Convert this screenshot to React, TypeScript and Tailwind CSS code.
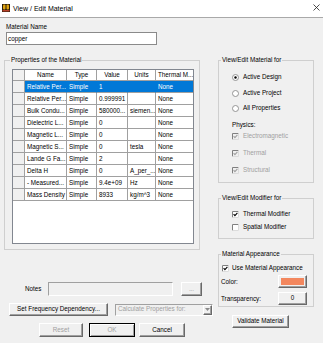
import React from 'react';

const rows = [
  ['Relative Per...', 'Simple', '1', '', 'None'],
  ['Relative Per...', 'Simple', '0.999991', '', 'None'],
  ['Bulk Condu...', 'Simple', '580000...', 'siemen...', 'None'],
  ['Dielectric L...', 'Simple', '0', '', 'None'],
  ['Magnetic L...', 'Simple', '0', '', 'None'],
  ['Magnetic S...', 'Simple', '0', 'tesla', 'None'],
  ['Lande G Fa...', 'Simple', '2', '', 'None'],
  ['Delta H', 'Simple', '0', 'A_per_...', 'None'],
  ['- Measured...', 'Simple', '9.4e+09', 'Hz', 'None'],
  ['Mass Density', 'Simple', '8933', 'kg/m^3', 'None'],
];

const headers = ['Name', 'Type', 'Value', 'Units', 'Thermal M...'];

function Btn({
  children,
  className = '',
  disabled = false,
  def = false,
}: {
  children?: React.ReactNode;
  className?: string;
  disabled?: boolean;
  def?: boolean;
}) {
  const frame = def
    ? 'border border-black shadow-[inset_1px_1px_0_#fff,inset_-1px_-1px_0_#a0a0a0]'
    : 'border border-t-white border-l-white border-r-[#696969] border-b-[#696969] shadow-[inset_-1px_-1px_0_#a0a0a0]';
  return (
    <div
      className={`flex items-center justify-center bg-[#f0f0f0] leading-none whitespace-nowrap ${frame} ${
        disabled ? 'text-[#a0a0a0]' : ''
      } ${className}`}
    >
      {children}
    </div>
  );
}

function Radio({ on = false }: { on?: boolean }) {
  return (
    <svg width="7" height="7" viewBox="0 0 7 7" className="shrink-0">
      <circle cx="3.5" cy="3.5" r="3" fill="#fff" stroke="#8a8a8a" strokeWidth="0.9" />
      {on && <circle cx="3.5" cy="3.5" r="1.2" fill="#000" />}
    </svg>
  );
}

function Check({ on = false, disabled = false }: { on?: boolean; disabled?: boolean }) {
  return (
    <svg width="7" height="7" viewBox="0 0 7 7" className="shrink-0">
      <rect x="0" y="0" width="7" height="7" fill={disabled ? '#f0f0f0' : '#fff'} />
      <path d="M0.5 6.5 V0.5 H6.5" fill="none" stroke="#808080" strokeWidth="1" />
      <path d="M6.5 0.5 V6.5 H0.5" fill="none" stroke="#dcdcdc" strokeWidth="1" />
      {on && (
        <path
          d="M1.6 3.2 L2.9 4.6 L5.4 1.9"
          fill="none"
          stroke={disabled ? '#a0a0a0' : '#000'}
          strokeWidth="1.1"
        />
      )}
    </svg>
  );
}

function Group({
  title,
  className = '',
  children,
}: {
  title: string;
  className?: string;
  children: React.ReactNode;
}) {
  return (
    <fieldset className={`border border-[#cfcfcf] ${className}`}>
      <legend className="px-[1px] h-[8px] leading-[8px]">{title}</legend>
      {children}
    </fieldset>
  );
}

function PropsTable() {
  return (
    <div className="ml-[2px] mt-[5px] w-[182px] h-[175px] bg-white border border-[#828790] overflow-hidden">
      <div className="grid grid-cols-[12px_42px_30px_31px_28px_37px]">
        <div className="h-[11px] bg-[#f0f0f0] border-r border-b border-[#a0a0a0]" />
        {headers.map((h, i) => (
          <div
            key={h}
            className={`h-[11px] leading-[10px] border-b border-[#a0a0a0] whitespace-nowrap overflow-hidden ${
              i < 4 ? 'border-r text-center' : 'pl-[2px]'
            }`}
          >
            {h}
          </div>
        ))}
        {rows.map((r, ri) => {
          const sel = ri === 0;
          return (
            <React.Fragment key={ri}>
              <div className="h-[12px] bg-[#f0f0f0] border-r border-b border-[#a0a0a0]" />
              {r.map((c, ci) => (
                <div
                  key={ci}
                  className={`h-[12px] leading-[11px] pl-[2px] border-b whitespace-nowrap overflow-hidden ${
                    ci < 4 ? 'border-r' : ''
                  } ${
                    sel
                      ? 'bg-[#0078d7] text-white border-b-[#a0a0a0] border-r-[#0078d7]'
                      : 'border-[#a0a0a0]'
                  }`}
                >
                  {c}
                </div>
              ))}
            </React.Fragment>
          );
        })}
      </div>
    </div>
  );
}

export default function App() {
  return (
    <div className="w-[323px] h-[343px] bg-[#f0f0f0] text-black text-[6.3px] font-['Liberation_Sans',Arial,sans-serif] overflow-hidden">
      {/* title bar */}
      <div className="h-[18px] bg-white border-b border-[#a9a9a9] flex items-center">
        <svg width="8" height="8" viewBox="0 0 8 8" className="ml-[2px] mt-[-1px]">
          <rect width="8" height="8" fill="#2b1e0c" />
          <rect x="1" y="0.5" width="2.5" height="5" rx="1" fill="#e0a512" />
          <rect x="4.5" y="0.5" width="2.5" height="5" rx="1" fill="#e0a512" />
          <rect x="0.5" y="6" width="7" height="1.5" fill="#b8402a" />
        </svg>
        <span className="ml-[3px] text-[7px] leading-none mt-[-1px]">View / Edit Material</span>
        <svg width="7" height="7" viewBox="0 0 7 7" className="ml-auto mr-[3px] mt-[-2px]">
          <path d="M0.5 0.5 L6.5 6.5 M6.5 0.5 L0.5 6.5" stroke="#222" strokeWidth="0.8" />
        </svg>
      </div>

      <div className="flex">
        {/* left column */}
        <div className="ml-[4px] w-[210px] flex flex-col">
          <div className="ml-[2px] mt-[5px] h-[8px] leading-[8px]">Material Name</div>
          <div className="ml-[2px] mt-[1px] w-[151px] h-[13px] bg-white border border-[#8a8a8a] pl-[1px] leading-[11px]">
            copper
          </div>

          <Group title="Properties of the Material" className="mt-[11px] w-[196px] pl-[5px]">
            <PropsTable />
            <div className="h-[5px]" />
          </Group>

          <div className="mt-[32px] h-[14px] flex items-center">
            <span className="ml-[21px] w-[23px]">Notes</span>
            <div className="w-[125px] h-[14px] bg-[#f0f0f0] border border-t-[#a0a0a0] border-l-[#a0a0a0] border-r-white border-b-white" />
            <Btn disabled className="ml-[8px] w-[21px] h-[14px]">
              ...
            </Btn>
          </div>

          <div className="mt-[7px] h-[13px] flex items-center">
            <Btn className="ml-[5px] w-[99px] h-[13px]">Set Frequency Dependency...</Btn>
            <div className="ml-[7px] w-[98px] h-[12px] flex items-center bg-[#f0f0f0] border border-t-[#a0a0a0] border-l-[#a0a0a0] border-r-white border-b-white">
              <span className="pl-[2px] flex-1 text-[#a0a0a0] whitespace-nowrap overflow-hidden leading-none">
                Calculate Properties for:
              </span>
              <Btn className="w-[9px] h-[10px]">
                <svg width="5" height="3" viewBox="0 0 5 3">
                  <path d="M0 0 H5 L2.5 3 Z" fill="#8a8a8a" />
                </svg>
              </Btn>
            </div>
          </div>

          <div className="mt-[7px] h-[14px] flex">
            <Btn disabled className="ml-[35px] w-[44px] h-[14px]">
              Reset
            </Btn>
            <Btn disabled def className="ml-[6px] w-[46px] h-[14px]">
              OK
            </Btn>
            <Btn className="ml-[4px] w-[46px] h-[14px]">Cancel</Btn>
          </div>
        </div>

        {/* right column */}
        <div className="ml-[4px] w-[96px] flex flex-col">
          <Group title="View/Edit Material for" className="mt-[38px] px-[2px] pb-[8px]">
            <div className="pl-[11px] flex flex-col">
              <div className="mt-[9px] h-[8px] flex items-center gap-[4px]">
                <Radio on />
                <span>Active Design</span>
              </div>
              <div className="mt-[8px] h-[8px] flex items-center gap-[4px]">
                <Radio />
                <span>Active Project</span>
              </div>
              <div className="mt-[7px] h-[8px] flex items-center gap-[4px]">
                <Radio />
                <span>All Properties</span>
              </div>
              <div className="mt-[9px] h-[8px] leading-[8px]">Physics:</div>
              <div className="mt-[3px] h-[8px] flex items-center gap-[4px] text-[#a0a0a0]">
                <Check on disabled />
                <span>Electromagnetic</span>
              </div>
              <div className="mt-[9px] h-[8px] flex items-center gap-[4px] text-[#a0a0a0]">
                <Check on disabled />
                <span>Thermal</span>
              </div>
              <div className="mt-[9px] h-[8px] flex items-center gap-[4px] text-[#a0a0a0]">
                <Check on disabled />
                <span>Structural</span>
              </div>
            </div>
          </Group>

          <Group title="View/Edit Modifier for" className="mt-[11px] px-[2px] pb-[7px]">
            <div className="pl-[11px] flex flex-col">
              <div className="mt-[8px] h-[8px] flex items-center gap-[4px]">
                <Check on />
                <span>Thermal Modifier</span>
              </div>
              <div className="mt-[5px] h-[8px] flex items-center gap-[4px]">
                <Check />
                <span>Spatial Modifier</span>
              </div>
            </div>
          </Group>

          <Group title="Material Appearance" className="mt-[11px] px-[2px] pb-[1px]">
            <div className="flex flex-col">
              <div className="mt-[6px] ml-[1px] h-[8px] flex items-center gap-[3px]">
                <Check on />
                <span>Use Material Appearance</span>
              </div>
              <div className="mt-[3px] h-[13px] flex items-center">
                <span>Color:</span>
                <Btn className="ml-auto mr-[4px] w-[29px] h-[13px] p-[2px]">
                  <div className="w-full h-full bg-[#f3875e]" />
                </Btn>
              </div>
              <div className="mt-[4px] h-[13px] flex items-center">
                <span>Transparency:</span>
                <Btn className="ml-auto mr-[4px] w-[29px] h-[13px]">0</Btn>
              </div>
            </div>
          </Group>

          <Btn className="mt-[8px] ml-[14px] w-[57px] h-[13px]">Validate Material</Btn>
        </div>
      </div>
    </div>
  );
}
